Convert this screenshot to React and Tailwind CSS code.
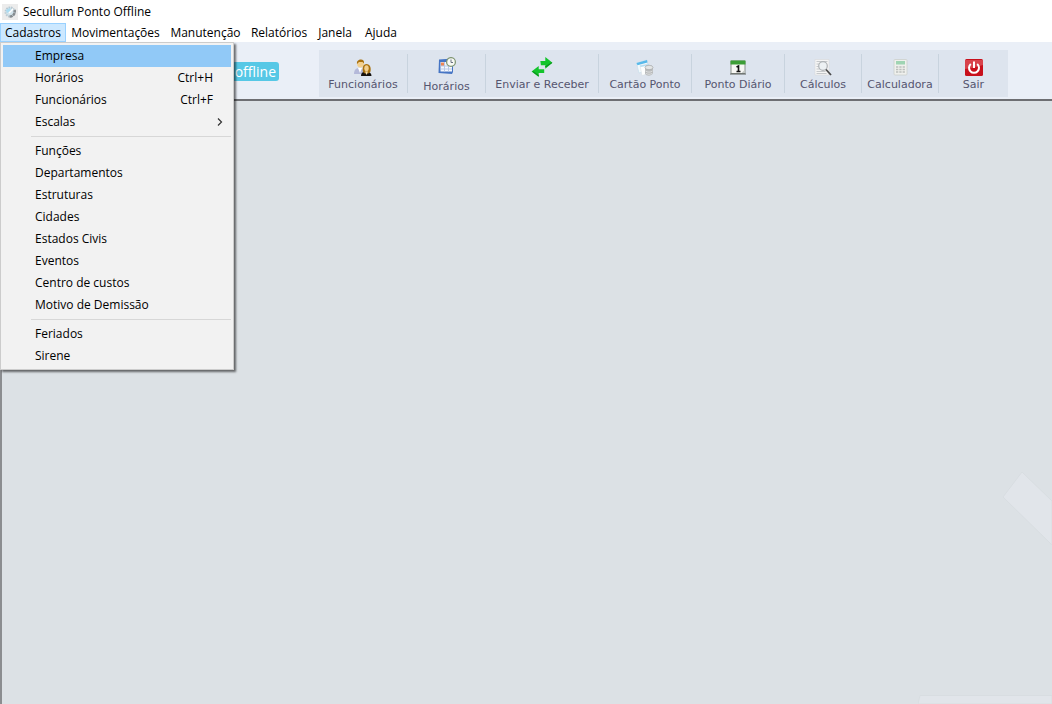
import { useState } from "react";

const menus = [
  { label: "Cadastros", width: "w-[66px]" },
  { label: "Movimentações", width: "w-[99px]" },
  { label: "Manutenção", width: "w-[81px]" },
  { label: "Relatórios", width: "w-[66px]" },
  { label: "Janela", width: "w-[46px]" },
  { label: "Ajuda", width: "w-[46px]" },
];

const cadastros = [
  [
    { label: "Empresa" },
    { label: "Horários", shortcut: "Ctrl+H" },
    { label: "Funcionários", shortcut: "Ctrl+F" },
    { label: "Escalas", submenu: true },
  ],
  [
    { label: "Funções" },
    { label: "Departamentos" },
    { label: "Estruturas" },
    { label: "Cidades" },
    { label: "Estados Civis" },
    { label: "Eventos" },
    { label: "Centro de custos" },
    { label: "Motivo de Demissão" },
  ],
  [{ label: "Feriados" }, { label: "Sirene" }],
];

function AppIcon() {
  return (
    <svg width="16" height="16" viewBox="0 0 16 16" aria-hidden="true">
      <rect width="16" height="16" fill="#ececec" />
      <circle cx="8" cy="8" r="4.500" fill="#d3e4ec" stroke="#b9c9d2" strokeWidth="2" strokeDasharray="1.600 .8" />
      <path d="M12.500 6A5 5 0 0 1 7 12.500" fill="none" stroke="#858b8f" strokeWidth="2.600" strokeDasharray="2.600 .6" />
      <path d="M4 6l4-2 1 3-4 2z" fill="#aadcf2" />
      <path d="M7 9l4-4" stroke="#fff" strokeWidth="1.500" />
    </svg>
  );
}

function PeopleIcon() {
  return (
    <svg className="shrink-0" width="20" height="18" viewBox="0 0 20 18" aria-hidden="true">
      <path d="M1 15c0-4 2-6 5-6s5 2 5 6z" fill="#b4b9d9" />
      <path d="M5 9l2 5 2-5z" fill="#fff" />
      <circle cx="7.500" cy="5" r="3.400" fill="#f3d08e" />
      <path d="M4 5c-.5-3 1.500-4.500 4-4.500 2 0 3.500 1.500 3 4L9.500 3 6 3z" fill="#a8710f" />
      <path d="M8 17c0-3 1.500-4.500 5-4.500s5.500 1.500 5.500 4.500z" fill="#15110e" />
      <path d="M10 13c-1-4 0-8 3.500-8s5 4 3.800 8l-2 1.500h-3.500z" fill="#a8710f" />
      <ellipse cx="13.500" cy="9.300" rx="2.200" ry="3" fill="#f3d08e" />
      <path d="M12 12.500h3L13.600 16z" fill="#f6e0b4" />
    </svg>
  );
}

function ScheduleIcon() {
  return (
    <svg className="shrink-0" width="20" height="18" viewBox="0 0 20 18" aria-hidden="true">
      <path d="M2 2.500L16 1.500V15L15 17 1.500 16z" fill="#4675c4" />
      <path d="M3.500 5h11.500v9.500H3.500z" fill="#f5f8fd" />
      <path d="M4 5.500h4V9H4z" fill="#ed8654" />
      <path d="M3.500 9h11.500M3.500 12h11.500M7.500 5v9.500M11.500 5v9.500" stroke="#b7c8e6" />
      <circle cx="14" cy="5" r="4.400" fill="#f8faf5" stroke="#829776" strokeWidth="1.300" />
      <path d="M14 2.500V5.500h2" fill="none" stroke="#697180" />
    </svg>
  );
}

function TransferIcon() {
  return (
    <svg className="shrink-0" width="22" height="20" viewBox="0 0 20 18" aria-hidden="true">
      <path d="M8.500 3.500H13V0l6.500 5.200L13 10.500V7.500H9z" fill="#13c42c" />
      <path d="M12 11H7V8L.5 13 7 18v-3.500h5z" fill="#13c42c" />
      <path d="M13 9l6-4M7 17l-5.500-4" stroke="#0b921d" fill="none" />
    </svg>
  );
}

function CardsIcon() {
  return (
    <svg className="shrink-0" width="20" height="18" viewBox="0 0 20 18" aria-hidden="true">
      <path d="M1.500 4L12 1l1 10-9 3z" fill="#f4fafd" stroke="#c3dbe9" strokeWidth=".6" />
      <path d="M1.500 4L12 1l.5 2.500L2.500 6.200z" fill="#58b9ea" />
      <path d="M5 6.500l9-1.500 1 9-8 2.500z" fill="#fdfefe" stroke="#d5dce0" strokeWidth=".5" />
      <path d="M5 6.500l9-1.500v1.500L5.500 8z" fill="#b5dcf0" />
      <path d="M10 9v5.500c1.500 3 6.500 3 8-.5V8z" fill="#b9bbbc" />
      <ellipse cx="14" cy="8.500" rx="4" ry="2.200" fill="#e4e6e6" stroke="#a3a6a8" strokeWidth=".7" />
      <path d="M10.500 12c2 1.500 5 1.500 7 0M11 14.500c2 1 4 1 6 0" fill="none" stroke="#e4e6e6" strokeWidth=".8" />
    </svg>
  );
}

function DayIcon() {
  return (
    <svg className="shrink-0" width="20" height="18" viewBox="0 0 20 18" aria-hidden="true">
      <path d="M3 2h14v12.500H3z" fill="#f7f7f4" stroke="#89908a" />
      <path d="M2.500 1.500h15v4h-15z" fill="#3c9e36" />
      <path d="M2 15h16" stroke="#5c615d" />
      <path d="M8.500 8l2-1v5M8.500 12.500h4" fill="none" stroke="#111" strokeWidth="1.600" />
      <path d="M13.500 14l3-3v3z" fill="#c5c9c6" />
    </svg>
  );
}

function SearchDocIcon() {
  return (
    <svg className="shrink-0" width="20" height="18" viewBox="0 0 20 18" aria-hidden="true">
      <path d="M2 .5h14v15.500H2z" fill="#f5f5f5" stroke="#d6d8da" strokeWidth=".6" />
      <path d="M3.500 2.500h11M3.500 5h3M3.500 7.500h3M3.500 10h3M3.500 12.500h9M3.500 14.500h10" stroke="#c6c9cb" />
      <circle cx="10" cy="7" r="4.300" fill="#edf1f3" stroke="#b0b4b7" strokeWidth="1.200" />
      <path d="M13 10.500l5 5.500" stroke="#4a4a4a" strokeWidth="1.800" />
    </svg>
  );
}

function CalculatorIcon() {
  return (
    <svg className="shrink-0" width="20" height="18" viewBox="0 0 20 18" aria-hidden="true">
      <rect x="4" y=".5" width="13" height="15.500" rx="1" fill="#eff0ed" stroke="#cccfcc" strokeWidth=".8" />
      <rect x="6" y="2" width="9" height="3.500" fill="#9fd4b3" />
      <path d="M6 8h9M6 10.500h9M6 13h9" stroke="#bcbfbd" strokeWidth="1.500" strokeDasharray="2.300 1" />
    </svg>
  );
}

function PowerIcon() {
  return (
    <svg className="shrink-0" width="20" height="18" viewBox="0 0 20 18" aria-hidden="true">
      <rect x="1" y="0" width="18" height="17" rx="1.500" fill="#c8101b" />
      <path d="M1 1h18v5Q10 9 1 10z" fill="#d8434b" />
      <path d="M6.800 5a5 5 0 1 0 6.400 0" fill="none" stroke="#fff" strokeWidth="2" />
      <path d="M10 2.500v6.500" stroke="#fff" strokeWidth="2" />
    </svg>
  );
}

const tools = [
  { label: "Funcionários", icon: PeopleIcon, width: "w-[89px]" },
  { label: "Horários", icon: ScheduleIcon, width: "w-[78px]", spacing: "gap-1 pt-[3px]" },
  { label: "Enviar e Receber", icon: TransferIcon, width: "w-[113px]", spacing: "pt-[3px]" },
  { label: "Cartão Ponto", icon: CardsIcon, width: "w-[93px]" },
  { label: "Ponto Diário", icon: DayIcon, width: "w-[93px]" },
  { label: "Cálculos", icon: SearchDocIcon, width: "w-[77px]" },
  { label: "Calculadora", icon: CalculatorIcon, width: "w-[77px]" },
  { label: "Sair", icon: PowerIcon, width: "w-[69px]" },
];

function DropdownMenu({ selected, onSelect }) {
  return (
    <div
      role="menu"
      className="absolute left-0 top-full z-10 w-[234px] border border-[#cccccc] bg-[#f2f2f2] p-[2px] shadow-[2px_2px_2px_rgba(0,0,0,0.55)]"
    >
      {cadastros.map((group, i) => (
        <div key={i}>
          {i > 0 && <div role="separator" className="my-[3px] ml-7 h-px bg-[#d7d7d7]" />}
          {group.map((item) => (
            <button
              key={item.label}
              role="menuitem"
              onMouseEnter={() => onSelect(item.label)}
              className={`flex h-[22px] w-full items-center justify-between pl-8 text-left ${
                item.submenu ? "pr-2" : "pr-[18px]"
              } ${selected === item.label ? "bg-[#91c9f7]" : ""}`}
            >
              <span>{item.label}</span>
              {item.shortcut && <span>{item.shortcut}</span>}
              {item.submenu && (
                <svg width="6" height="8" viewBox="0 0 6 8" aria-hidden="true">
                  <path d="M1 .5L4.500 4 1 7.500" fill="none" stroke="#333" strokeWidth="1.200" />
                </svg>
              )}
            </button>
          ))}
        </div>
      ))}
    </div>
  );
}

export default function App() {
  const [open, setOpen] = useState("Cadastros");
  const [selected, setSelected] = useState("Empresa");

  return (
    <div className="flex min-h-screen flex-col overflow-hidden bg-white font-['Segoe_UI','Open_Sans',sans-serif] text-[12px] leading-4 text-black">
      <header className="flex h-[23px] items-center gap-[5px] pl-[2px]">
        <AppIcon />
        <h1>Secullum Ponto Offline</h1>
      </header>

      <nav className="relative flex h-[19px]">
        {menus.map(({ label, width }) => (
          <button
            key={label}
            onClick={() => setOpen(open === label ? "" : label)}
            className={`flex shrink-0 justify-center whitespace-nowrap border leading-[18px] ${width} ${
              open === label ? "border-[#99d1ff] bg-[#cce8ff]" : "border-transparent"
            }`}
          >
            {label}
          </button>
        ))}
        {open === "Cadastros" && <DropdownMenu selected={selected} onSelect={setSelected} />}
      </nav>

      {/* Toolbar */}
      <div className="flex h-[59px] items-start gap-10 border-b-2 border-[#6d6e72] bg-[#eaeff7] pt-2">
        <div className="flex w-[279px] shrink-0 justify-end pt-3">
          <span className="rounded-[3px] bg-[#56c8e6] px-[3px] font-['Open_Sans',sans-serif] text-[14px] leading-[19px] text-white">
            offline
          </span>
        </div>
        <div className="flex h-[47px] shrink-0 bg-[#dde4ee] py-1">
          {tools.map(({ label, icon: Icon, width, spacing = "pt-[5px]" }, i) => (
            <button
              key={label}
              className={`flex flex-col items-center whitespace-nowrap font-['Verdana','DejaVu_Sans',sans-serif] text-[11px] leading-4 text-[#55556e] ${width} ${spacing} ${
                i < tools.length - 1 ? "border-r border-[#c8d3de]" : ""
              }`}
            >
              <Icon />
              <span>{label}</span>
            </button>
          ))}
        </div>
      </div>

      {/* Workspace with the watermark in the corner */}
      <main className="flex flex-1 items-end justify-end border-l-2 border-[#8b8d90] bg-[#dce1e5]">
        <svg width="134" height="234" viewBox="0 0 134 234" aria-hidden="true">
          <path d="M104 2L85 27l49 48V31z" fill="#e1e5ea" stroke="#d8dde1" />
          <path d="M2 225.500h132V234H0z" fill="#e1e5ea" stroke="#d8dde1" />
        </svg>
      </main>
    </div>
  );
}
